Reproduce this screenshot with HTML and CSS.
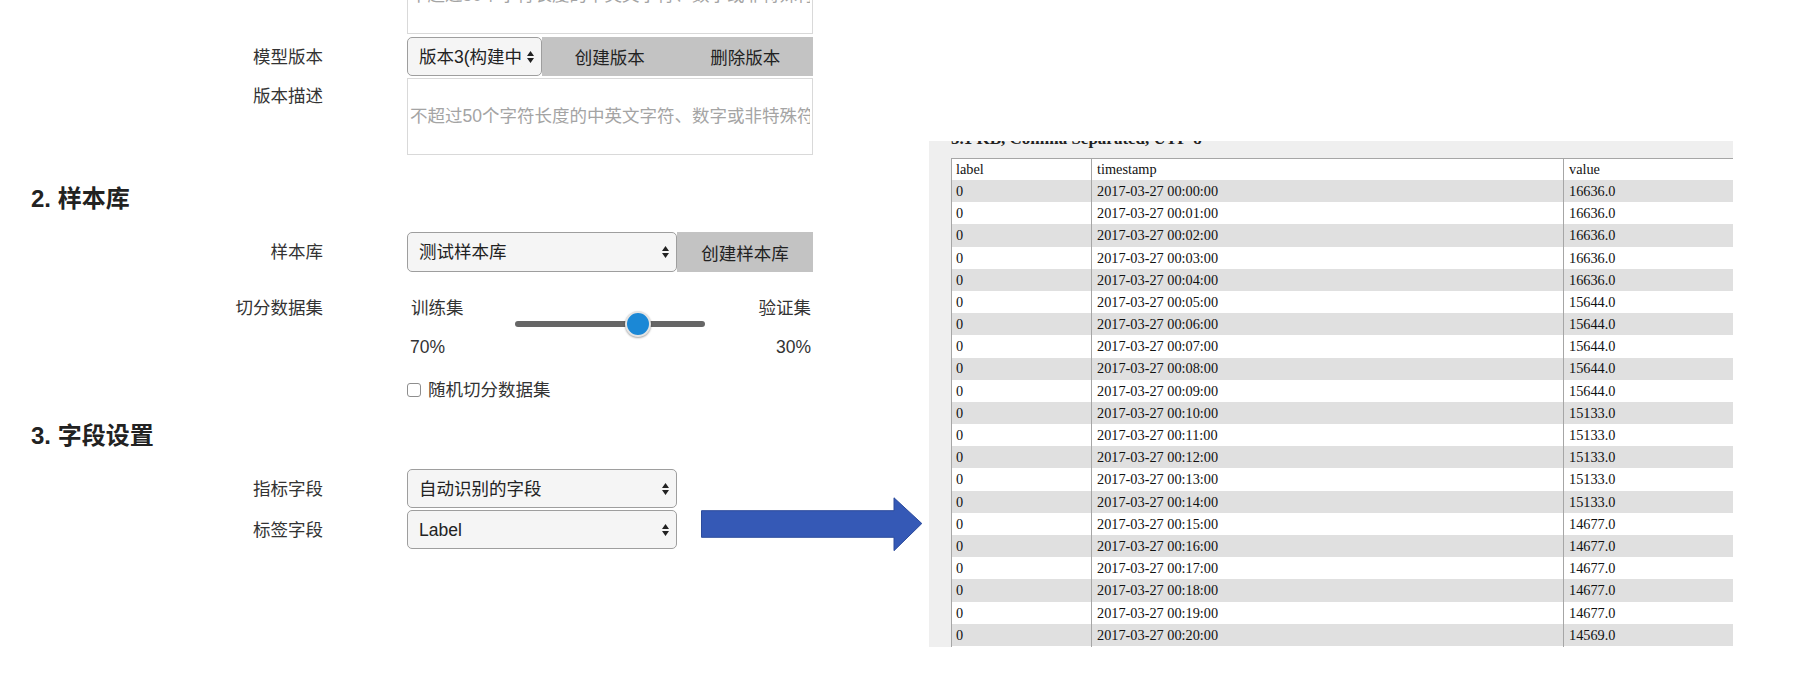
FILE: index.html
```html
<!DOCTYPE html>
<html lang="zh-CN">
<head>
<meta charset="utf-8">
<title>模型设置</title>
<link rel="stylesheet" href="styles.css">
</head>
<body>
<div class="page">
  <main class="form">
    <div class="row row-text">
      <span class="label"></span>
      <input class="text-input" type="text" placeholder="不超过50个字符长度的中英文字符、数字或非特殊符号">
    </div>

    <div class="row row-control row-version">
      <label class="label">模型版本</label>
      <div class="group">
        <div class="select-wrap w-version">
          <select class="select select-narrow"><option>版本3(构建中)</option></select>
          <svg class="caret" viewBox="0 0 7 12"><path d="M0 5 3.5 0 7 5Z M0 7 3.5 12 7 7Z"/></svg>
        </div>
        <button class="btn">创建版本</button>
        <button class="btn">删除版本</button>
      </div>
    </div>

    <div class="row row-text row-desc">
      <label class="label label-top">版本描述</label>
      <input class="text-input" type="text" placeholder="不超过50个字符长度的中英文字符、数字或非特殊符号">
    </div>

    <h2 class="section-title">2. 样本库</h2>

    <div class="row row-control row-sample">
      <label class="label">样本库</label>
      <div class="group">
        <div class="select-wrap w-wide">
          <select class="select"><option>测试样本库</option></select>
          <svg class="caret" viewBox="0 0 7 12"><path d="M0 5 3.5 0 7 5Z M0 7 3.5 12 7 7Z"/></svg>
        </div>
        <button class="btn">创建样本库</button>
      </div>
    </div>

    <div class="row row-split">
      <label class="label label-line">切分数据集</label>
      <div class="split">
        <div class="split-names"><span>训练集</span><span>验证集</span></div>
        <div class="slider"><div class="track"><span class="thumb"></span></div></div>
        <div class="split-values"><span>70%</span><span>30%</span></div>
      </div>
    </div>

    <div class="row row-check">
      <span class="label"></span>
      <label class="check"><input class="checkbox" type="checkbox"><span>随机切分数据集</span></label>
    </div>

    <h2 class="section-title section-3">3. 字段设置</h2>

    <div class="row row-control row-metric">
      <label class="label">指标字段</label>
      <div class="select-wrap w-wide">
        <select class="select"><option>自动识别的字段</option></select>
        <svg class="caret" viewBox="0 0 7 12"><path d="M0 5 3.5 0 7 5Z M0 7 3.5 12 7 7Z"/></svg>
      </div>
    </div>

    <div class="row row-control row-labelfield">
      <label class="label">标签字段</label>
      <div class="select-wrap w-wide">
        <select class="select"><option>Label</option></select>
        <svg class="caret" viewBox="0 0 7 12"><path d="M0 5 3.5 0 7 5Z M0 7 3.5 12 7 7Z"/></svg>
      </div>
    </div>
  </main>

  <svg class="arrow" viewBox="0 0 222 55" width="222" height="55">
    <path d="M0.5 13.7 H193 V0.8 L220.8 26.5 L193 53.7 V40.3 H0.5 Z" fill="#3559b6" stroke="#2c4b9c" stroke-width="1"/>
  </svg>

  <section class="preview">
    <div class="caption">5.1 KB, Comma Separated, UTF-8</div>
    <table class="table">
      <colgroup><col class="c1"><col class="c2"><col class="c3"></colgroup>
      <thead>
        <tr><th>label</th><th>timestamp</th><th>value</th></tr>
      </thead>
      <tbody>
        <tr><td>0</td><td>2017-03-27 00:00:00</td><td>16636.0</td></tr>
        <tr><td>0</td><td>2017-03-27 00:01:00</td><td>16636.0</td></tr>
        <tr><td>0</td><td>2017-03-27 00:02:00</td><td>16636.0</td></tr>
        <tr><td>0</td><td>2017-03-27 00:03:00</td><td>16636.0</td></tr>
        <tr><td>0</td><td>2017-03-27 00:04:00</td><td>16636.0</td></tr>
        <tr><td>0</td><td>2017-03-27 00:05:00</td><td>15644.0</td></tr>
        <tr><td>0</td><td>2017-03-27 00:06:00</td><td>15644.0</td></tr>
        <tr><td>0</td><td>2017-03-27 00:07:00</td><td>15644.0</td></tr>
        <tr><td>0</td><td>2017-03-27 00:08:00</td><td>15644.0</td></tr>
        <tr><td>0</td><td>2017-03-27 00:09:00</td><td>15644.0</td></tr>
        <tr><td>0</td><td>2017-03-27 00:10:00</td><td>15133.0</td></tr>
        <tr><td>0</td><td>2017-03-27 00:11:00</td><td>15133.0</td></tr>
        <tr><td>0</td><td>2017-03-27 00:12:00</td><td>15133.0</td></tr>
        <tr><td>0</td><td>2017-03-27 00:13:00</td><td>15133.0</td></tr>
        <tr><td>0</td><td>2017-03-27 00:14:00</td><td>15133.0</td></tr>
        <tr><td>0</td><td>2017-03-27 00:15:00</td><td>14677.0</td></tr>
        <tr><td>0</td><td>2017-03-27 00:16:00</td><td>14677.0</td></tr>
        <tr><td>0</td><td>2017-03-27 00:17:00</td><td>14677.0</td></tr>
        <tr><td>0</td><td>2017-03-27 00:18:00</td><td>14677.0</td></tr>
        <tr><td>0</td><td>2017-03-27 00:19:00</td><td>14677.0</td></tr>
        <tr><td>0</td><td>2017-03-27 00:20:00</td><td>14569.0</td></tr>
        <tr><td>0</td><td>2017-03-27 00:21:00</td><td>14569.0</td></tr>
      </tbody>
    </table>
  </section>
</div>
</body>
</html>
```

FILE: styles.css
```css
* { box-sizing: border-box; }

html, body {
  margin: 0;
  padding: 0;
  background: #ffffff;
}

body {
  font-family: "Liberation Sans", "Noto Sans CJK SC", sans-serif;
  color: #333333;
  overflow: hidden;
}

.page {
  position: relative;
  display: flex;
  align-items: flex-start;
  width: 1800px;
  height: 692px;
  overflow: hidden;
}

/* ---------- form column ---------- */
.form {
  flex: 0 0 813px;
  width: 813px;
  margin-top: -43px;
  display: flex;
  flex-direction: column;
}

.row {
  display: grid;
  grid-template-columns: 323px 406px;
  column-gap: 84px;
  font-size: 17.5px;
}

.label {
  text-align: right;
  color: #333333;
  align-self: center;
  line-height: 24px;
  white-space: nowrap;
}

.label-top {
  align-self: start;
  padding-top: 6px;
}

.label-line {
  align-self: start;
  line-height: 20px;
}

.row-text { height: 77px; }
.row-desc { margin-top: 2px; }

.text-input {
  width: 406px;
  height: 77px;
  margin: 0;
  padding: 0 2px;
  border: 1px solid #d9d9d9;
  background: #ffffff;
  font: inherit;
  color: #333333;
  outline: none;
}

.text-input::placeholder {
  color: #a4a4a4;
  opacity: 1;
}

.row-control { height: 39px; }
.row-version { margin-top: 3px; }
.row-sample { margin-top: 17px; height: 40px; }
.row-metric { margin-top: 17px; }
.row-labelfield { margin-top: 2px; }

.group {
  display: flex;
  height: 100%;
}

.select-wrap {
  position: relative;
  height: 100%;
  flex: 0 0 auto;
}

.w-version { width: 135px; }
.w-wide { width: 270px; }

.select {
  -webkit-appearance: none;
  appearance: none;
  width: 100%;
  height: 100%;
  margin: 0;
  padding: 0 14px 0 11px;
  border: 1px solid #9e9e9e;
  border-radius: 5px;
  background: #f5f5f5;
  font: inherit;
  color: #222222;
  outline: none;
}

.select-narrow { padding-right: 19px; }

.caret {
  position: absolute;
  right: 8px;
  top: 50%;
  width: 7px;
  height: 12px;
  margin-top: -6px;
  fill: #222222;
  pointer-events: none;
}

.btn {
  flex: 1 1 0;
  height: 100%;
  margin: 0;
  padding: 0;
  border: 0;
  background: #c3c3c3;
  font: inherit;
  color: #222222;
  white-space: nowrap;
}

.section-title {
  margin: 28px 0 0;
  padding-left: 31px;
  height: 32px;
  font-size: 24px;
  line-height: 32px;
  font-weight: 700;
  color: #222222;
}

.section-3 { margin-top: 20px; }

/* split slider */
.row-split { margin-top: 26px; }

.split { display: flex; flex-direction: column; }

.split-names,
.split-values {
  display: flex;
  justify-content: space-between;
  line-height: 20px;
  color: #333333;
}

.split-names { padding: 0 2px 0 4px; }
.split-values { padding: 0 2px 0 3px; margin-top: 7px; }

.slider {
  height: 12px;
  padding-left: 108px;
}

.track {
  position: relative;
  width: 190px;
  height: 6px;
  margin-top: 3px;
  background: #666666;
  border-radius: 3px;
}

.thumb {
  position: absolute;
  left: calc(65% - 13px);
  top: -10px;
  width: 26px;
  height: 26px;
  border-radius: 50%;
  background: #1b88d6;
  border: 2px solid #e4e4e4;
  box-shadow: 0 1px 2px rgba(0, 0, 0, 0.35);
}

/* checkbox */
.row-check { margin-top: 23px; line-height: 20px; }

.check {
  display: flex;
  align-items: center;
  gap: 7px;
  color: #333333;
}

.checkbox {
  -webkit-appearance: none;
  appearance: none;
  width: 14px;
  height: 14px;
  margin: 0;
  border: 1px solid #8e8e8e;
  border-radius: 3px;
  background: #ffffff;
}

/* ---------- arrow ---------- */
.arrow {
  position: absolute;
  left: 701px;
  top: 497px;
}

/* ---------- preview panel ---------- */
.preview {
  flex: 0 0 804px;
  width: 804px;
  height: 506px;
  margin-left: 116px;
  margin-top: 141px;
  padding-left: 22px;
  background: #efefef;
  overflow: hidden;
}

.caption {
  margin-top: -11px;
  height: 17px;
  line-height: 17px;
  font-family: "Liberation Serif", serif;
  font-size: 17px;
  font-weight: 700;
  color: #222222;
  white-space: nowrap;
}

.table {
  margin-top: 11px;
  width: 1000px;
  table-layout: fixed;
  border-collapse: separate;
  border-spacing: 0;
  border-top: 1px solid #a6a6a6;
  border-left: 1px solid #a6a6a6;
  background: #ffffff;
  font-family: "Liberation Serif", serif;
  font-size: 14.3px;
  color: #111111;
}

.c1 { width: 139px; }
.c2 { width: 472px; }
.c3 { width: 389px; }

.table th,
.table td {
  height: 22.2px;
  padding: 0 5px 0 5px;
  line-height: 1;
  text-align: left;
  font-weight: 400;
  white-space: nowrap;
  border-left: 1px solid #a6a6a6;
}

.table th:first-child,
.table td:first-child {
  border-left: 0;
  padding-left: 4px;
}

.table thead th { height: 21px; }

.table tbody tr:nth-child(odd) { background: #e0e0e0; }
.table tbody tr:nth-child(even) { background: #ffffff; }
```
